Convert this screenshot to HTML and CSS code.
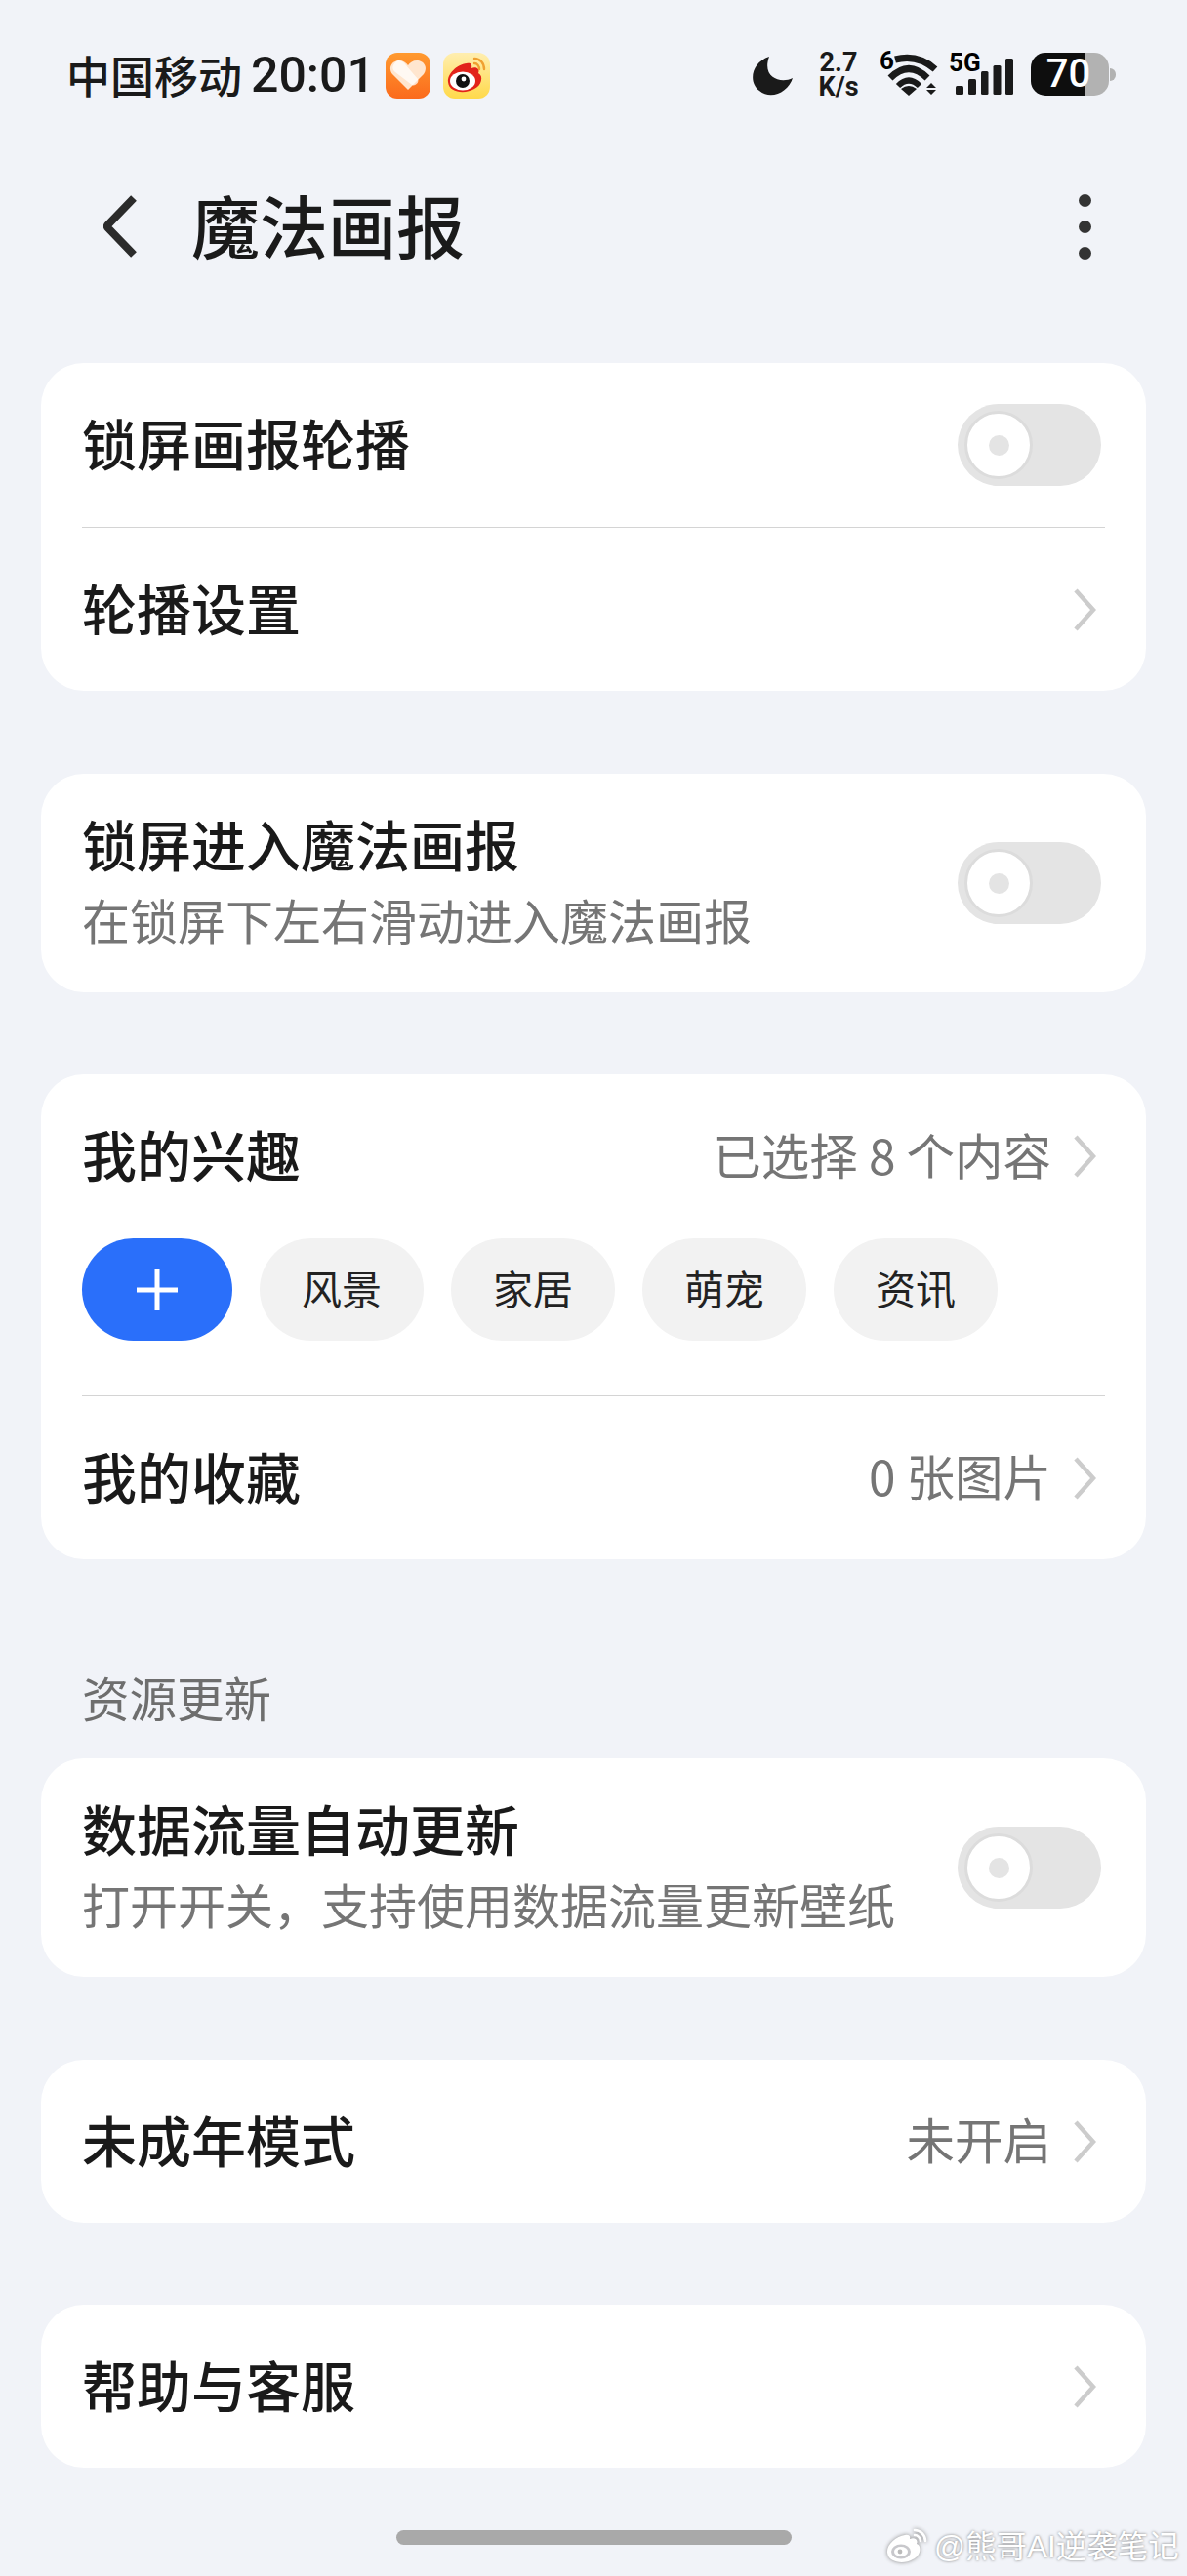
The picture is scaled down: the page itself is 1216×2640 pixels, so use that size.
FILE: index.html
```html
<!DOCTYPE html>
<html lang="zh-CN">

<head>
    <meta charset="UTF-8">
    <meta name="viewport" content="width=device-width, initial-scale=1.0">
    <title>魔法画报</title>
    <link rel="stylesheet" href="styles.css">
</head>

<body>
    <div class="status-bar">
        <div class="status-left">
            <span class="carrier">中国移动</span>
            <span class="clock">20:01</span>
            <svg class="app-icon heart-icon" viewBox="0 0 46 47">
                <defs>
                    <linearGradient id="heartBg" x1="0" y1="0" x2="0" y2="1">
                        <stop offset="0" stop-color="#ff9a30" />
                        <stop offset="1" stop-color="#fb6a1c" />
                    </linearGradient>
                </defs>
                <rect width="46" height="47" rx="12" fill="url(#heartBg)" />
                <path d="M23 38 L7 22 C2 15 7 8 14 8 C18 8 21 10 23 13 C25 10 28 8 32 8 C39 8 44 15 39 22 Z" fill="#ffe6cf" />
                <path d="M10 10 C14 6 18 9 21 13 L33 27 C35 30 30 35 27 33 L10 20 C6 17 7 13 10 10 Z" fill="#fff" opacity="0.75" />
            </svg>
            <svg class="app-icon weibo-icon" viewBox="0 0 48 47">
                <defs>
                    <linearGradient id="weiboBg" x1="0" y1="0" x2="0" y2="1">
                        <stop offset="0" stop-color="#ffeeb0" />
                        <stop offset="1" stop-color="#ffd94a" />
                    </linearGradient>
                </defs>
                <rect width="48" height="47" rx="12" fill="url(#weiboBg)" />
                <path d="M5 30 C4 22 14 12 24 11 C28 10 30 12 29 16 C34 14 38 17 36 21 C42 24 39 34 32 37 C24 42 6 42 5 30 Z" fill="#e2231a" />
                <ellipse cx="20" cy="29" rx="13" ry="9.5" fill="#fff" />
                <circle cx="20" cy="29" r="7" fill="#111" />
                <circle cx="21" cy="27" r="2.4" fill="#fff" />
                <path d="M32 6 C38 6 42 11 42 17 M32 11 C35 11 37 14 37 17" fill="none" stroke="#f0a030" stroke-width="2.4" stroke-linecap="round" />
            </svg>
        </div>
        <div class="status-right">
            <svg class="moon" viewBox="771 56 41 42">
                <path d="M788 58 C770 64 766 84 778 93 C790 103 808 94 812 80 C800 86 780 80 788 58 Z" fill="#1a1a1a" />
            </svg>
            <div class="speed"><span>2.7</span><span>K/s</span></div>
            <svg class="wifi" viewBox="900 44 62 66">
                <g fill="none" stroke="#1a1a1a">
                    <path d="M917 61 Q940 55 958 71" stroke-width="7" />
                    <path d="M912 80 Q931 61 950 80" stroke-width="7" />
                    <path d="M920 88 Q931 77 942 88" stroke-width="6" />
                </g>
                <path d="M923 91 Q931 85 939 91 L931 98 Z" fill="#1a1a1a" />
                <path d="M954 85 L959 90 L949 90 Z M949 92 L959 92 L954 97 Z" fill="#1a1a1a" />
                <text x="901" y="71" class="wifi-six">6</text>
            </svg>
            <svg class="signal" viewBox="972 44 66 66">
                <text x="972" y="73" class="five-g">5G</text>
                <g fill="#1a1a1a">
                    <rect x="979" y="88" width="8" height="9" rx="1.5" />
                    <rect x="992" y="81" width="8" height="16" rx="1.5" />
                    <rect x="1005" y="73" width="7.5" height="24" rx="1.5" />
                    <rect x="1017.5" y="67" width="8" height="30" rx="1.5" />
                    <rect x="1030" y="60" width="8" height="37" rx="1.5" />
                </g>
            </svg>
            <div class="battery">
                <div class="battery-body"><span>70</span></div>
                <div class="battery-nub"></div>
            </div>
        </div>
    </div>

    <div class="title-bar">
        <svg class="back" viewBox="0 0 36 64">
            <path d="M31 3 L5 30 Q3 32 5 34 L31 61" fill="none" stroke="#2b2b2b" stroke-width="8" />
        </svg>
        <h1>魔法画报</h1>
        <div class="more"><i></i><i></i><i></i></div>
    </div>

    <div class="card">
        <div class="row">
            <span class="row-title">锁屏画报轮播</span>
            <div class="toggle"><div class="knob"></div></div>
        </div>
        <div class="divider"></div>
        <div class="row row-short">
            <span class="row-title">轮播设置</span>
            <svg class="chevron" viewBox="0 0 24 44"><path d="M3 2 L21 22 L3 42" /></svg>
        </div>
    </div>

    <div class="card card-tight">
        <div class="row row-double">
            <div class="row-text">
                <div class="row-title">锁屏进入魔法画报</div>
                <div class="row-sub">在锁屏下左右滑动进入魔法画报</div>
            </div>
            <div class="toggle"><div class="knob"></div></div>
        </div>
    </div>

    <div class="card">
        <div class="row">
            <span class="row-title">我的兴趣</span>
            <div class="row-right">
                <span class="row-value">已选择 8 个内容</span>
                <svg class="chevron" viewBox="0 0 24 44"><path d="M3 2 L21 22 L3 42" /></svg>
            </div>
        </div>
        <div class="chips">
            <div class="chip chip-add">
                <svg viewBox="0 0 42 42"><path d="M21 0 V42 M0 21 H42" /></svg>
            </div>
            <div class="chip">风景</div>
            <div class="chip">家居</div>
            <div class="chip">萌宠</div>
            <div class="chip">资讯</div>
        </div>
        <div class="divider"></div>
        <div class="row row-short">
            <span class="row-title">我的收藏</span>
            <div class="row-right">
                <span class="row-value">0 张图片</span>
                <svg class="chevron" viewBox="0 0 24 44"><path d="M3 2 L21 22 L3 42" /></svg>
            </div>
        </div>
    </div>

    <div class="section-label">资源更新</div>

    <div class="card">
        <div class="row row-double">
            <div class="row-text">
                <div class="row-title">数据流量自动更新</div>
                <div class="row-sub">打开开关，支持使用数据流量更新壁纸</div>
            </div>
            <div class="toggle"><div class="knob"></div></div>
        </div>
    </div>

    <div class="card card-tight">
        <div class="row row-short">
            <span class="row-title">未成年模式</span>
            <div class="row-right">
                <span class="row-value">未开启</span>
                <svg class="chevron" viewBox="0 0 24 44"><path d="M3 2 L21 22 L3 42" /></svg>
            </div>
        </div>
    </div>

    <div class="card">
        <div class="row row-short">
            <span class="row-title">帮助与客服</span>
            <svg class="chevron" viewBox="0 0 24 44"><path d="M3 2 L21 22 L3 42" /></svg>
        </div>
    </div>

    <div class="home-bar"></div>

    <div class="watermark">
        <svg viewBox="0 0 44 38">
            <path d="M1 25 C0 17 10 8 19 7 C23 6 25 8 24 11 C29 9 33 12 31 16 C37 18 35 29 27 32 C19 37 2 36 1 25 Z" fill="#fff" />
            <ellipse cx="15" cy="24" rx="10" ry="7.5" fill="#c8c8cc" />
            <ellipse cx="15" cy="24" rx="7" ry="5" fill="#fff" />
            <circle cx="14" cy="24" r="2.4" fill="#bbb" />
            <path d="M29 2 C35 2 40 7 40 13 M29 7 C32 7 35 10 35 13" fill="none" stroke="#fff" stroke-width="2.6" stroke-linecap="round" />
        </svg>
        <span>@熊哥AI逆袭笔记</span>
    </div>
</body>

</html>
```

FILE: styles.css
```css
* {
    box-sizing: border-box;
}

body {
    margin: 0;
    position: relative;
    height: 2640px;
    overflow: hidden;
    background-color: #f1f3f8;
    color: #1a1a1a;
    font-family: "Noto Sans CJK SC", Roboto, sans-serif;
}

/* status bar */
.status-bar {
    display: flex;
    justify-content: space-between;
    align-items: center;
    height: 78px;
    margin-top: 46px;
    padding: 0 73px 16px 68px;
}

.status-left,
.status-right {
    display: flex;
    align-items: center;
}

.carrier {
    font-size: 45px;
    font-weight: 500;
    line-height: 62px;
}

.clock {
    margin-left: 9px;
    font-family: Roboto, sans-serif;
    font-size: 50px;
    font-weight: 500;
    line-height: 62px;
}

.app-icon {
    width: 46px;
    height: 47px;
}

.heart-icon {
    margin-left: 11px;
}

.weibo-icon {
    width: 48px;
    margin-left: 13px;
}

.moon {
    width: 41px;
    height: 42px;
}

.speed {
    display: flex;
    flex-direction: column;
    align-items: center;
    width: 44px;
    margin-left: 25px;
    font-family: Roboto, sans-serif;
    font-size: 27px;
    font-weight: 700;
    line-height: 25px;
}

.wifi {
    width: 62px;
    height: 66px;
    margin-left: 19px;
}

.wifi-six {
    font-family: Roboto, sans-serif;
    font-size: 26px;
    font-weight: 700;
}

.signal {
    width: 66px;
    height: 66px;
    margin-left: 10px;
}

.five-g {
    font-family: Roboto, sans-serif;
    font-size: 26px;
    font-weight: 700;
}

.battery {
    display: flex;
    align-items: center;
    margin-bottom: 2px;
    margin-left: 18px;
}

.battery-body {
    display: flex;
    justify-content: center;
    width: 80px;
    height: 44px;
    padding-right: 3px;
    border-radius: 15px;
    background: linear-gradient(to right, #0e0e0e 70%, #b2b2b2 70%);
    color: #fff;
    font-family: Roboto, sans-serif;
    font-size: 40px;
    font-weight: 500;
    line-height: 44px;
}

.battery-nub {
    width: 6px;
    height: 13px;
    margin-left: 1px;
    border-radius: 0 6px 6px 0;
    background-color: #b2b2b2;
}

/* title */
.title-bar {
    display: flex;
    align-items: center;
    height: 216px;
    margin-bottom: 32px;
    padding: 0 98px 0 106px;
}

.back {
    width: 36px;
    height: 64px;
}

.title-bar h1 {
    flex: 1;
    margin: 0 0 6px 54px;
    font-size: 70px;
    font-weight: 500;
}

.more {
    display: flex;
    flex-direction: column;
    gap: 14px;
}

.more i {
    display: block;
    width: 13px;
    height: 13px;
    border-radius: 50%;
    background-color: #333;
}

/* cards */
.card {
    margin: 0 42px 85px;
    border-radius: 44px;
    background-color: #fff;
}

.card-tight {
    margin-bottom: 84px;
}

.row {
    display: flex;
    justify-content: space-between;
    align-items: center;
    height: 168px;
    padding: 0 51px 0 42px;
}

.row-short {
    height: 167px;
}

.row-double {
    height: 224px;
    padding-right: 46px;
}

.row-title {
    font-size: 56px;
    font-weight: 500;
    line-height: 78px;
}

.row > .row-title {
    margin-bottom: 6px;
}

.row-text {
    margin-bottom: 4px;
}

.row-sub {
    color: #757575;
    font-size: 49px;
    line-height: 78px;
}

.row-right {
    display: flex;
    align-items: center;
    gap: 22px;
}

.row-value {
    margin-bottom: 6px;
    color: #757575;
    font-size: 49.5px;
}

.divider {
    height: 1px;
    margin: 0 42px;
    background-color: #d4d4d4;
}

.chevron {
    width: 24px;
    height: 44px;
}

.chevron path {
    fill: none;
    stroke: #cccccc;
    stroke-width: 4.5;
}

/* toggle */
.toggle {
    width: 147px;
    height: 84px;
    padding: 7px;
    border-radius: 42px;
    background-color: #e4e4e4;
}

.row:not(.row-double) > .toggle {
    margin-right: -5px;
}

.knob {
    display: flex;
    align-items: center;
    justify-content: center;
    width: 70px;
    height: 70px;
    border: 3px solid #dcdcdc;
    border-radius: 50%;
    background-color: #fff;
}

.knob::after {
    content: "";
    width: 21px;
    height: 21px;
    border-radius: 50%;
    background-color: #e4e4e4;
}

/* chips */
.chips {
    display: flex;
    gap: 28px;
    height: 161px;
    padding: 0 42px;
}

.chip {
    display: flex;
    align-items: center;
    justify-content: center;
    width: 168px;
    height: 105px;
    padding-bottom: 5px;
    border-radius: 53px;
    background-color: #f2f2f2;
    color: #222;
    font-size: 41px;
}

.chip-add {
    width: 154px;
    padding-bottom: 0;
    background-color: #2a6ffa;
}

.chip-add svg {
    width: 42px;
    height: 42px;
}

.chip-add path {
    fill: none;
    stroke: #fff;
    stroke-width: 5;
}

.section-label {
    display: flex;
    align-items: center;
    height: 119px;
    padding: 0 0 8px 84px;
    color: #6e6e6e;
    font-size: 48.5px;
}

.home-bar {
    width: 405px;
    height: 15px;
    margin: -21px auto 0;
    border-radius: 8px;
    background-color: #a9a9a9;
}

.watermark {
    position: absolute;
    top: 2590px;
    left: 908px;
    display: flex;
    align-items: center;
    gap: 5px;
    color: #fff;
    font-size: 31.5px;
    line-height: 40px;
    font-family: "Liberation Sans", "Noto Sans CJK SC", sans-serif;
    text-shadow: 0 0 3px #777;
}

.watermark svg {
    width: 44px;
    height: 38px;
    filter: drop-shadow(0 0 2px #888);
}
```
